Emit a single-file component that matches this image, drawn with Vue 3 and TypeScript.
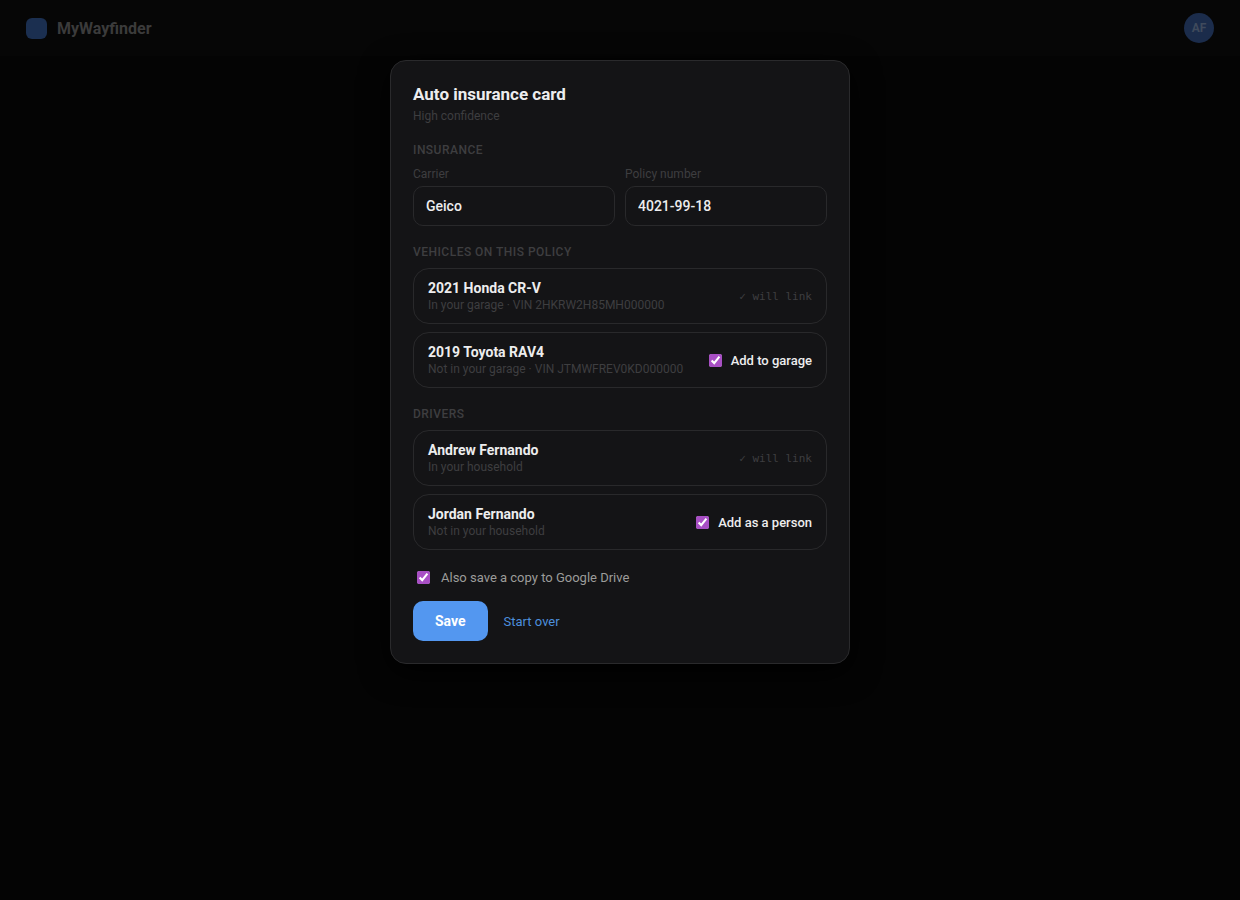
<script setup lang="ts">
import { reactive, ref } from 'vue'

interface Item {
  id: string
  name: string
  detail: string
  linked: boolean
  action: string
  checked: boolean
}

const carrier = ref('Geico')
const policy = ref('4021-99-18')
const saveCopy = ref(true)

const groups = reactive<{ title: string; items: Item[] }[]>([
  {
    title: 'Vehicles on this policy',
    items: [
      { id: 'crv', name: '2021 Honda CR-V', detail: 'In your garage · VIN 2HKRW2H85MH000000', linked: true, action: '', checked: false },
      { id: 'rav4', name: '2019 Toyota RAV4', detail: 'Not in your garage · VIN JTMWFREV0KD000000', linked: false, action: 'Add to garage', checked: true },
    ],
  },
  {
    title: 'Drivers',
    items: [
      { id: 'andrew', name: 'Andrew Fernando', detail: 'In your household', linked: true, action: '', checked: false },
      { id: 'jordan', name: 'Jordan Fernando', detail: 'Not in your household', linked: false, action: 'Add as a person', checked: true },
    ],
  },
])
</script>

<template>
  <div class="page">
    <header class="topbar">
      <div class="brand"><span class="mark"></span>MyWayfinder</div>
      <button class="avatar" type="button" aria-label="Account">AF</button>
    </header>

    <div class="overlay">
      <form class="card" role="dialog" aria-labelledby="dialog-title" @submit.prevent>
        <h1 id="dialog-title">Auto insurance card</h1>
        <p class="confidence">High confidence</p>

        <h2>Insurance</h2>
        <div class="fields">
          <div class="field">
            <label for="carrier">Carrier</label>
            <input id="carrier" v-model="carrier" type="text" />
          </div>
          <div class="field">
            <label for="policy">Policy number</label>
            <input id="policy" v-model="policy" type="text" />
          </div>
        </div>

        <section v-for="group in groups" :key="group.title">
          <h2>{{ group.title }}</h2>
          <ul>
            <li v-for="item in group.items" :key="item.id">
              <div class="info">
                <div class="name">{{ item.name }}</div>
                <div class="detail">{{ item.detail }}</div>
              </div>
              <span v-if="item.linked" class="link-state">✓ will link</span>
              <label v-else class="add">
                <input v-model="item.checked" type="checkbox" />{{ item.action }}
              </label>
            </li>
          </ul>
        </section>

        <label class="copy">
          <input v-model="saveCopy" type="checkbox" />Also save a copy to Google Drive
        </label>

        <div class="actions">
          <button class="save" type="submit">Save</button>
          <button class="restart" type="button">Start over</button>
        </div>
      </form>
    </div>
  </div>
</template>

<style>
body {
  background: #040404;
}
</style>

<style scoped>
.page {
  min-height: 100vh;
  box-sizing: border-box;
  background: #040404;
  color: #ededee;
  font-family: Roboto, "Liberation Sans", sans-serif;
  font-size: 13px;
}

button,
input {
  font-family: inherit;
}

.topbar {
  height: 56px;
  padding: 0 26px;
  box-sizing: border-box;
  display: flex;
  align-items: center;
  justify-content: space-between;
  background: #060606;
}

.brand {
  display: flex;
  align-items: center;
  gap: 10px;
  font-size: 16px;
  font-weight: 700;
  color: #3b3b3b;
}

.mark {
  width: 21px;
  height: 21px;
  border-radius: 6px;
  background: #1b2f50;
}

.avatar {
  width: 30px;
  height: 30px;
  padding: 0;
  border: 0;
  border-radius: 50%;
  background: #1b2c4b;
  color: #3f4a5c;
  font-size: 12px;
  font-weight: 700;
}

.overlay {
  display: flex;
  justify-content: center;
  padding: 4px 20px 40px;
}

.card {
  width: 100%;
  max-width: 460px;
  box-sizing: border-box;
  padding: 22px;
  border: 1px solid #2a2a2c;
  border-radius: 16px;
  background: #141416;
  box-shadow: 0 8px 30px #000000;
}

h1 {
  margin: 0 0 3px;
  font-size: 17px;
  line-height: 22px;
  font-weight: 700;
}

.confidence {
  margin: 0;
  font-size: 12px;
  line-height: 16px;
  color: #3e3e40;
}

h2 {
  margin: 18px 0 8px;
  font-size: 12px;
  line-height: 16px;
  font-weight: 500;
  letter-spacing: 0.04em;
  text-transform: uppercase;
  color: #3e3e40;
}

.fields {
  display: grid;
  grid-template-columns: 1fr 1fr;
  gap: 10px;
}

.field {
  display: flex;
  flex-direction: column;
  gap: 4px;
}

.field label {
  font-size: 12px;
  line-height: 16px;
  color: #3e3e40;
}

.field input {
  height: 40px;
  width: 100%;
  box-sizing: border-box;
  padding: 0 12px;
  border: 1px solid #29292b;
  border-radius: 10px;
  background: #141416;
  color: #ededee;
  font-size: 14px;
  font-weight: 500;
}

ul {
  margin: 0;
  padding: 0;
  list-style: none;
  display: flex;
  flex-direction: column;
  gap: 8px;
}

li {
  min-height: 56px;
  box-sizing: border-box;
  padding: 10px 14px;
  display: flex;
  align-items: center;
  justify-content: space-between;
  gap: 12px;
  border: 1px solid #29292b;
  border-radius: 16px;
}

.name {
  font-size: 14px;
  line-height: 18px;
  font-weight: 700;
}

.detail {
  font-size: 12px;
  line-height: 16px;
  color: #3e3e40;
}

.link-state {
  font-family: "DejaVu Sans Mono", monospace;
  font-size: 11px;
  color: #3e3e40;
}

input[type="checkbox"] {
  width: 13px;
  height: 13px;
  margin: 3px 3px 3px 4px;
  accent-color: #a84fc4;
}

.add {
  display: flex;
  align-items: center;
  gap: 6px;
  font-size: 13px;
  font-weight: 500;
  white-space: nowrap;
}

.copy {
  margin-top: 18px;
  display: flex;
  align-items: center;
  gap: 8px;
  line-height: 18px;
  color: #9c9c9a;
}

.actions {
  margin-top: 14px;
  display: flex;
}

.save {
  height: 40px;
  padding: 0 22px;
  border: 0;
  border-radius: 10px;
  background: #5397f0;
  color: #ffffff;
  font-size: 14px;
  font-weight: 700;
}

.restart {
  padding: 0 16px;
  border: 0;
  background: transparent;
  color: #4d8fdc;
  font-size: 13px;
}
</style>
